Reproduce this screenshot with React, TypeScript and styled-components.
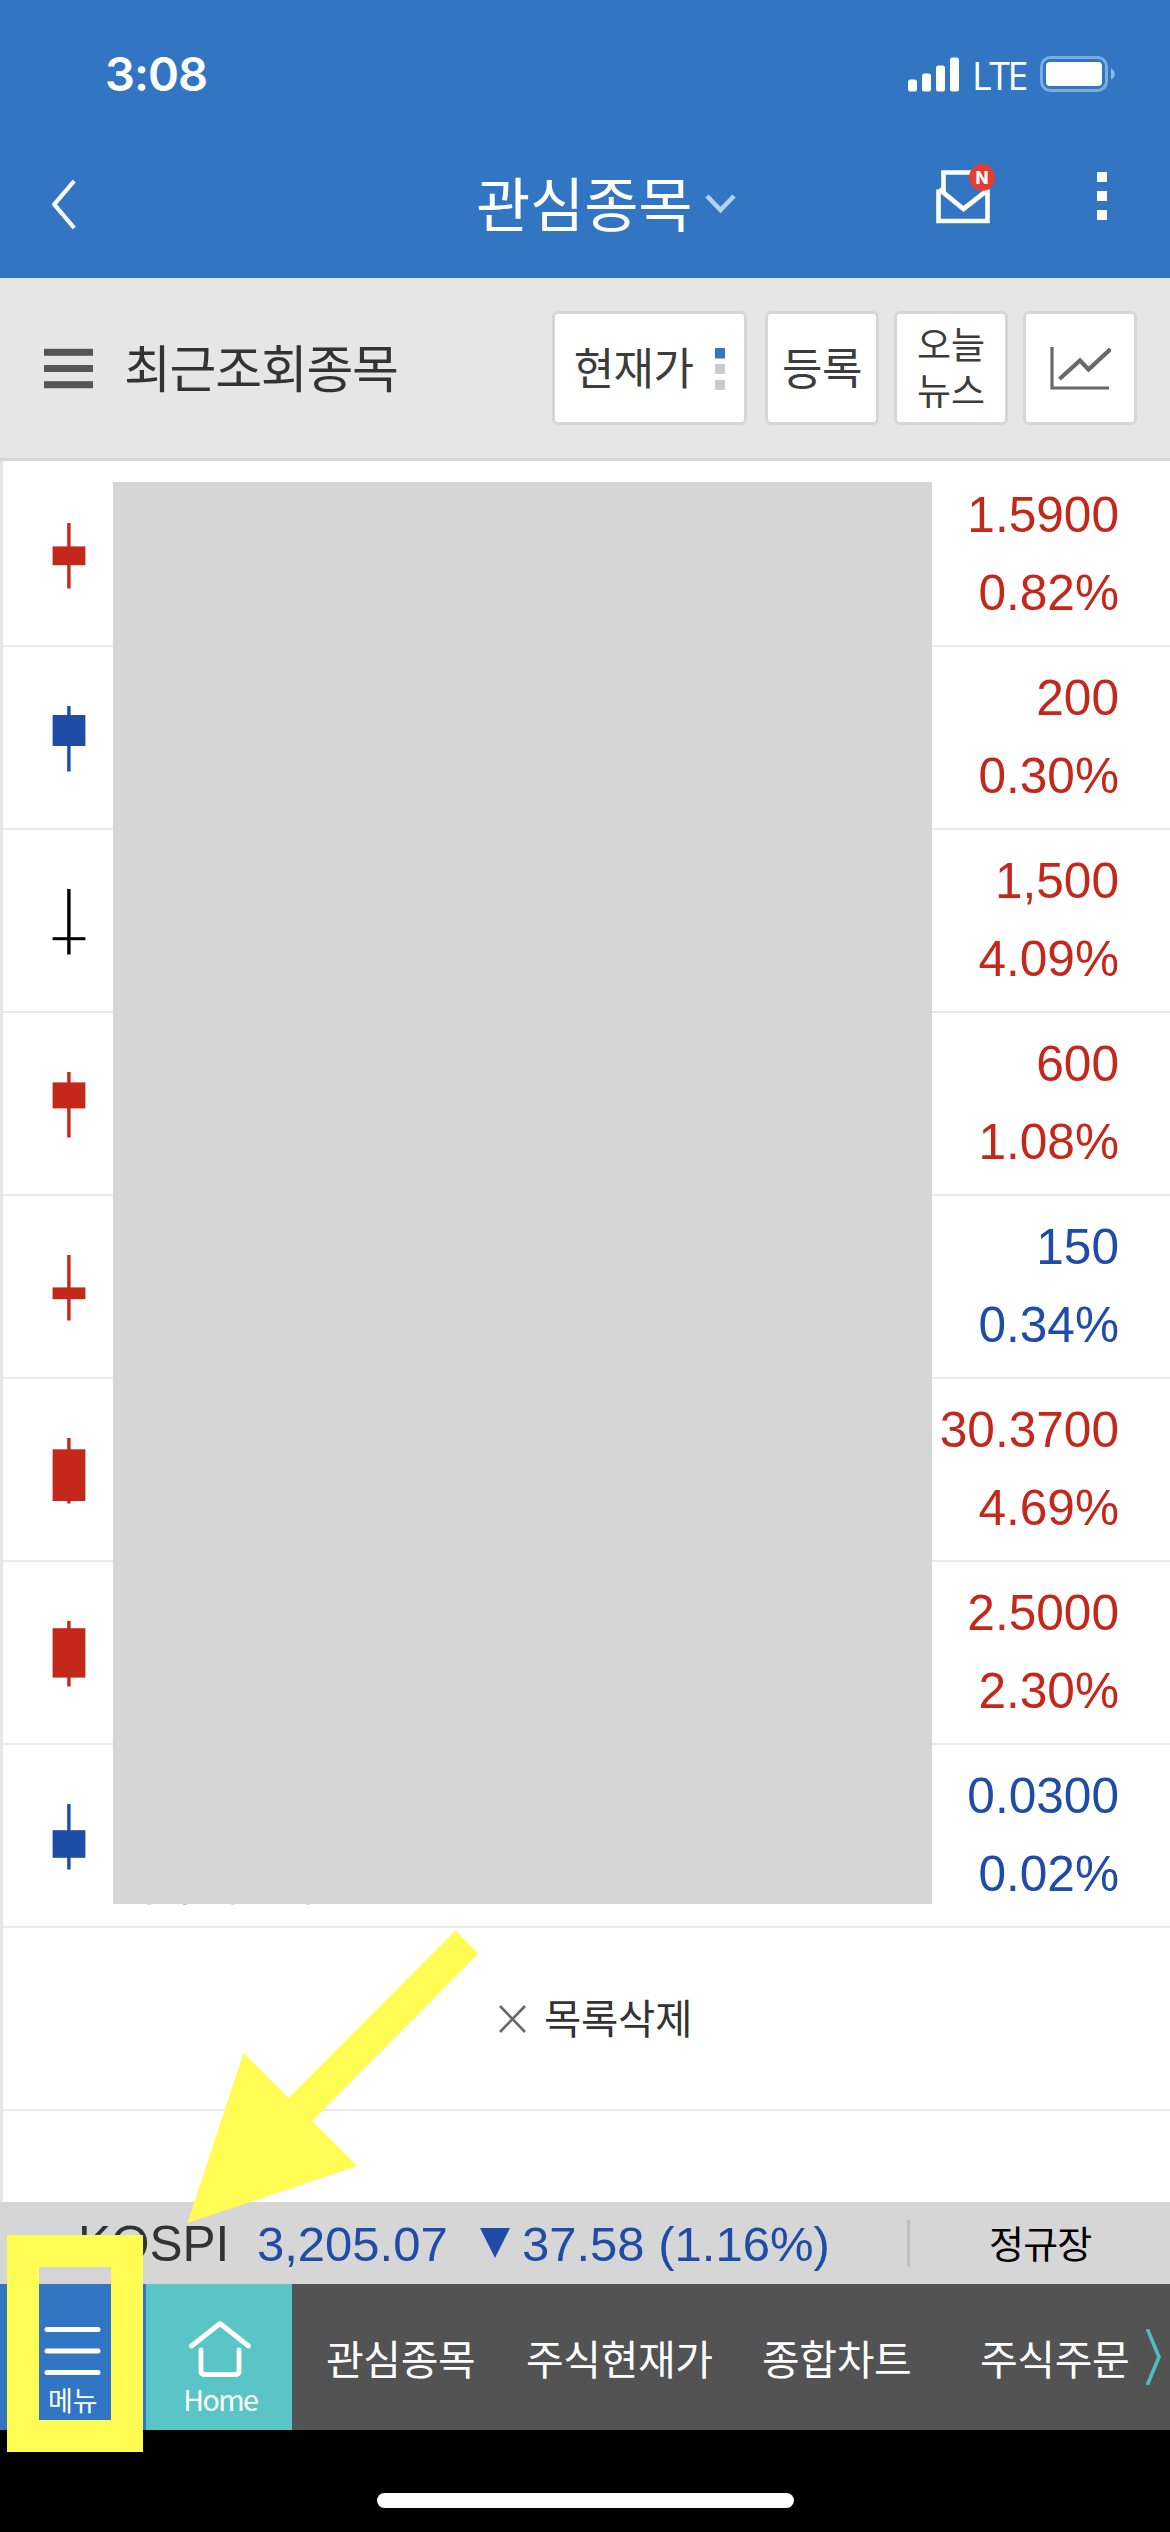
import React from "react";
import styled, { createGlobalStyle } from "styled-components";

const RED = "#c4281b";
const BLUE = "#1e4ca6";
const BLACK = "#000000";
const BRAND = "#3276c3";
const YELLOW = "#fffc54";

const KR = `"Noto Sans CJK KR", sans-serif`;
const NUM = `"Liberation Sans", "Noto Sans CJK KR", sans-serif`;

const GlobalStyle = createGlobalStyle`
  * { box-sizing: border-box; }
  html, body { margin: 0; padding: 0; background: #000; }
  button { margin: 0; padding: 0; border: 0; background: none; font: inherit; color: inherit; }
  svg { display: block; flex: none; }
`;

const Screen = styled.div`
  position: relative;
  width: 1170px;
  height: 2532px;
  display: flex;
  flex-direction: column;
  overflow: hidden;
  background: #000;
  font-family: ${KR};
`;

const Header = styled.header`
  height: 278px;
  background: ${BRAND};
  color: #fff;
`;

const StatusBar = styled.div`
  height: 148px;
  padding: 0 54px 0 105px;
  display: flex;
  align-items: center;
  justify-content: space-between;
`;

const Clock = styled.span`
  font: 600 47px/60px Inter, sans-serif;
  letter-spacing: -1px;
`;

const StatusIcons = styled.div`
  display: flex;
  align-items: center;
`;

const Carrier = styled.span`
  width: 54px;
  margin: 4px 14px 0 13px;
  font: 500 37.5px/40px "Open Sans", sans-serif;
  letter-spacing: -2.4px;
`;

const TitleBar = styled.div`
  height: 130px;
  padding: 0 62px 0 50px;
  display: grid;
  grid-template-columns: 426px 1fr 172px;
`;

const BackButton = styled.button`
  width: 30px;
  padding-top: 30px;
  display: flex;
  align-items: flex-start;
`;

const ScreenTitle = styled.h1`
  margin: 0;
  display: flex;
  gap: 13px;
  font-size: 59px;
  font-weight: 400;
  line-height: 108px;
  letter-spacing: -0.2px;
  white-space: nowrap;

  svg { margin-top: 44px; }
`;

const HeaderActions = styled.div`
  display: flex;
  justify-content: space-between;
  padding: 15px 0 0 0;
`;

const Toolbar = styled.section`
  height: 183px;
  padding: 33px 33px 0 44px;
  display: flex;
  align-items: flex-start;
  background: #e6e6e6;
  border-bottom: 3px solid #d5d5d5;
`;

const ListTitle = styled.div`
  flex: 1;
  height: 114px;
  display: flex;
  align-items: center;
  gap: 31px;
  color: #333;
  font-size: 51px;
  font-weight: 400;
  letter-spacing: -1.3px;
  white-space: nowrap;
`;

const ListName = styled.span`
  height: 74px;
  line-height: 70px;
`;

const ToolButtons = styled.div`
  display: flex;
  gap: 15px;
`;

const ToolButton = styled.button<{ $w: number; $size?: number; $ls?: number; $mr?: number }>`
  width: ${(p) => p.$w}px;
  height: 114px;
  margin-right: ${(p) => p.$mr ?? 0}px;
  display: flex;
  align-items: center;
  justify-content: center;
  gap: 22px;
  background: #fff;
  border: 3px solid #d6d6d6;
  border-radius: 6px;
  color: #3c3c3c;
  font-size: ${(p) => p.$size ?? 44}px;
  font-weight: 400;
  letter-spacing: ${(p) => p.$ls ?? -0.6}px;
  white-space: nowrap;
`;

const ToolLabel = styled.span`
  padding-bottom: 5px;
  line-height: 46px;
`;

const List = styled.main`
  position: relative;
  height: 1741px;
  padding-top: 3px;
  background: #fff;
  border-left: 3px solid #e6e6e6;
`;

const Row = styled.div`
  height: 183px;
  padding: 0 51px 0 49px;
  display: flex;
  justify-content: space-between;
  border-bottom: 2px solid #e9e9e9;
`;

const Change = styled.div<{ $color: string }>`
  padding-top: 12px;
  color: ${(p) => p.$color};
  font-family: ${NUM};
  font-size: 49.6px;
  line-height: 78px;
  text-align: right;
`;

const Mask = styled.div`
  position: absolute;
  left: 110px;
  top: 21px;
  width: 819px;
  height: 1422px;
  background: #d6d6d6;

  /* slivers of the covered row that stick out under the block */
  &::after {
    content: "";
    position: absolute;
    left: 34px;
    top: 100%;
    width: 4px;
    height: 1px;
    background: #dcdcdc;
    box-shadow: 36px 0 #c4c4c4, 84px 0 #dcdcdc, 159px 0 #dcdcdc;
  }
`;

const ClearRow = styled.button`
  width: 100%;
  height: 183px;
  padding: 0 0 0 496px;
  display: flex;
  align-items: center;
  gap: 18px;
  border-bottom: 2px solid #e9e9e9;
  color: #333;
  font-size: 40.5px;
  font-weight: 400;
  line-height: 60px;
  letter-spacing: -0.2px;
`;

const ClearLabel = styled.span`
  padding-bottom: 3px;
`;

const Ticker = styled.section`
  height: 82px;
  padding-left: 78px;
  display: flex;
  align-items: center;
  background: #d6d6d6;
  color: ${BLUE};
  font-family: ${NUM};
  font-size: 49px;
  line-height: 60px;
  white-space: pre;

  > * { flex: none; }
`;

const IndexName = styled.span`
  width: 179px;
  padding-top: 2px;
  color: #333;
  font-size: 49.5px;
`;

const IndexValue = styled.span`
  width: 223px;
  padding-top: 2px;
`;

const IndexDelta = styled.span`
  width: 397px;
  padding: 2px 0 0 12px;
`;

const Divider = styled.span`
  width: 3px;
  height: 47px;
  background: #bfbfbf;
`;

const Session = styled.span`
  padding: 0 0 3px 79px;
  color: #000;
  font-family: ${KR};
  font-size: 38px;
  font-weight: 400;
  letter-spacing: -0.8px;
`;

const TabBar = styled.nav`
  height: 146px;
  display: flex;
  background: #535353;
  color: #fff;
`;

const IconTab = styled.button<{ $bg: string; $top: number; $w: number }>`
  width: ${(p) => p.$w}px;
  padding-top: ${(p) => p.$top}px;
  display: flex;
  flex-direction: column;
  align-items: center;
  background: ${(p) => p.$bg};
`;

const IconLabel = styled.span<{ $size: number; $mt?: number; $ml?: number; $ls?: number }>`
  height: 40px;
  margin-top: ${(p) => p.$mt ?? 0}px;
  margin-left: ${(p) => p.$ml ?? 0}px;
  font-size: ${(p) => p.$size}px;
  line-height: 40px;
  font-weight: 400;
  letter-spacing: ${(p) => p.$ls ?? 0}px;
`;

const TabLinks = styled.div`
  flex: 1;
  display: flex;
  align-items: center;
  padding: 0 8px 0 34px;
  font-size: 41px;
  font-weight: 400;
  line-height: 60px;
  letter-spacing: -0.4px;
  white-space: nowrap;
`;

const TabLink = styled.a<{ $w: number }>`
  width: ${(p) => p.$w}px;
`;

const HomeArea = styled.footer`
  flex: 1;
  padding-top: 63px;
  display: flex;
  justify-content: center;
  align-items: flex-start;
`;

const HomeIndicator = styled.span`
  width: 417px;
  height: 15px;
  border-radius: 8px;
  background: #fff;
`;

const HighlightBox = styled.div`
  position: absolute;
  left: 7px;
  top: 2235px;
  width: 136px;
  height: 217px;
  border: 32px solid ${YELLOW};
`;

const ArrowLayer = styled.div`
  position: absolute;
  left: 187px;
  top: 1930px;
`;

interface Quote {
  change: string;
  rate: string;
  color: string;
  candle: string;
  body: [number, number];
}

const quotes: Quote[] = [
  { change: "1.5900", rate: "0.82%", color: RED, candle: RED, body: [82.4, 18.8] },
  { change: "200", rate: "0.30%", color: RED, candle: BLUE, body: [68, 31] },
  { change: "1,500", rate: "4.09%", color: RED, candle: BLACK, body: [107.2, 3] },
  { change: "600", rate: "1.08%", color: RED, candle: RED, body: [69.4, 26] },
  { change: "150", rate: "0.34%", color: BLUE, candle: RED, body: [91.4, 11.8] },
  { change: "30.3700", rate: "4.69%", color: RED, candle: RED, body: [70.3, 51.7] },
  { change: "2.5000", rate: "2.30%", color: RED, candle: RED, body: [66.2, 49.4] },
  { change: "0.0300", rate: "0.02%", color: BLUE, candle: BLUE, body: [85.2, 27.6] },
];

const Candle = ({ color, body }: { color: string; body: [number, number] }) => (
  <svg width="34" height="181" viewBox="0 0 34 181" fill={color}>
    <rect x="15.2" y="59" width="3.4" height="65.5" />
    <rect x="0.6" y={body[0]} width="32.8" height={body[1]} />
  </svg>
);

const SignalIcon = () => (
  <svg width="51" height="35" viewBox="0 0 51 35" fill="#fff">
    <rect x="0" y="22.5" width="9" height="12" rx="2.5" />
    <rect x="14" y="16.5" width="9" height="18" rx="2.5" />
    <rect x="28" y="8.5" width="9" height="26" rx="2.5" />
    <rect x="42" y="0.5" width="9" height="34" rx="2.5" />
  </svg>
);

const BatteryIcon = () => (
  <svg width="76" height="36" viewBox="0 0 76 36">
    <rect x="1.5" y="1.5" width="65" height="33" rx="9" fill="none" stroke="#7aaddb" strokeWidth="3" />
    <rect x="6" y="6" width="56" height="24" rx="4" fill="#fff" />
    <path d="M71 12.5c5 2 5 9 0 11z" fill="#8bb8e0" />
  </svg>
);

const MailIcon = () => (
  <svg width="60" height="64" viewBox="0 0 60 64">
    <path d="M7.5 31V9.5H40" fill="none" stroke="#fff" strokeWidth="4.6" />
    <path d="M2.5 26.5V58H51.5V26.5" fill="none" stroke="#fff" strokeWidth="4.6" />
    <path d="M3 26.5L6 28.5L27.5 46L48 30L52 26.5" fill="none" stroke="#fff" strokeWidth="4.8" />
    <ellipse cx="46" cy="14.5" rx="13" ry="13.5" fill="#e33d34" />
    <text x="46" y="20.5" textAnchor="middle" fill="#fff" fontFamily="Inter, sans-serif" fontWeight="800" fontSize="17">N</text>
  </svg>
);

const MoreIcon = () => (
  <svg width="12" height="60" viewBox="0 0 12 60" fill="#fff">
    <rect x="1" y="9" width="10" height="10" />
    <rect x="1" y="28" width="10" height="10" />
    <rect x="1" y="47" width="10" height="10" />
  </svg>
);

export default function App() {
  return (
    <>
      <GlobalStyle />
      <Screen>
        <Header>
          <StatusBar>
            <Clock>3:08</Clock>
            <StatusIcons>
              <SignalIcon />
              <Carrier>LTE</Carrier>
              <BatteryIcon />
            </StatusIcons>
          </StatusBar>
          <TitleBar>
            <BackButton aria-label="back">
              <svg width="28" height="52" viewBox="0 0 28 52" fill="none" stroke="#fff" strokeWidth="4.2" strokeLinejoin="round">
                <path d="M24.2 3L4.2 26.3L24.2 50" />
              </svg>
            </BackButton>
            <ScreenTitle>
              관심종목
              <svg width="32" height="24" viewBox="0 0 32 24" fill="none" stroke="#b5d3ee" strokeWidth="4.6">
                <path d="M2 4L15.5 18L29 4" />
              </svg>
            </ScreenTitle>
            <HeaderActions>
              <MailIcon />
              <MoreIcon />
            </HeaderActions>
          </TitleBar>
        </Header>

        <Toolbar>
          <ListTitle>
            <svg width="49" height="41" viewBox="0 0 49 41" fill="#555">
              <rect y="0.8" width="49" height="7" />
              <rect y="17" width="49" height="7" />
              <rect y="33.2" width="49" height="7" />
            </svg>
            <ListName>최근조회종목</ListName>
          </ListTitle>
          <ToolButtons>
            <ToolButton $w={195} $mr={3}>
              <ToolLabel>현재가</ToolLabel>
              <svg width="10" height="44" viewBox="0 0 10 44" fill="#cbcbcb">
                <rect y="2" width="10" height="10.5" fill={BRAND} />
                <rect y="18" width="10" height="10" />
                <rect y="34" width="10" height="10" />
              </svg>
            </ToolButton>
            <ToolButton $w={114}>
              <ToolLabel>등록</ToolLabel>
            </ToolButton>
            <ToolButton $w={114} $size={37} $ls={0}>
              <ToolLabel>
                오늘
                <br />
                뉴스
              </ToolLabel>
            </ToolButton>
            <ToolButton $w={114}>
              <svg width="62" height="46" viewBox="0 0 62 46" fill="none" stroke="#69696c">
                <path d="M3 2V43H60" strokeWidth="3.2" />
                <path d="M10.5 34L31 15.500L39.500 24.500L61.500 4" strokeWidth="4.2" />
              </svg>
            </ToolButton>
          </ToolButtons>
        </Toolbar>

        <List>
          {quotes.map((q) => (
            <Row key={q.change}>
              <Candle color={q.candle} body={q.body} />
              <Change $color={q.color}>
                <div>{q.change}</div>
                <div>{q.rate}</div>
              </Change>
            </Row>
          ))}
          <ClearRow>
            <svg width="27" height="28" viewBox="0 0 27 28" stroke="#69696c" strokeWidth="2.6">
              <path d="M1 1L26 27M26 1L1 27" />
            </svg>
            <ClearLabel>목록삭제</ClearLabel>
          </ClearRow>
          <Mask />
        </List>

        <Ticker>
          <IndexName>KOSPI</IndexName>
          <IndexValue>3,205.07</IndexValue>
          <svg width="30" height="30" viewBox="0 0 30 30" fill={BLUE}>
            <path d="M0 0H30L15 30Z" />
          </svg>
          <IndexDelta>37.58 (1.16%)</IndexDelta>
          <Divider />
          <Session>정규장</Session>
        </Ticker>

        <TabBar>
          <IconTab $bg={BRAND} $top={42} $w={146}>
            <svg width="57" height="50" viewBox="0 0 57 50" stroke="#fff" strokeWidth="5" strokeLinecap="round">
              <path d="M3 3.5H54M3 25H54M3 46.5H54" />
            </svg>
            <IconLabel $size={27} $mt={4}>메뉴</IconLabel>
          </IconTab>
          <IconTab $bg="#5ac5c7" $top={36} $w={147}>
            <svg width="64" height="60" viewBox="0 0 64 60" fill="none" stroke="#fff" strokeWidth="4.8" strokeLinecap="round" strokeLinejoin="round">
              <path d="M4.500 26L33 3.500L61.500 26" />
              <path d="M14 30V51Q14 54.500 17.500 54.500H48.500Q52 54.500 52 51V30" />
            </svg>
            <IconLabel $size={28.5} $mt={-1} $ml={3} $ls={-1.5}>Home</IconLabel>
          </IconTab>
          <TabLinks>
            <TabLink $w={200}>관심종목</TabLink>
            <TabLink $w={236}>주식현재가</TabLink>
            <TabLink $w={218}>종합차트</TabLink>
            <TabLink $w={166}>주식주문</TabLink>
            <svg width="16" height="56" viewBox="0 0 16 56" fill="none" stroke="#4fbcbf" strokeWidth="3.6">
              <path d="M0.5 -2L13 28L0.5 58" />
            </svg>
          </TabLinks>
        </TabBar>

        <HomeArea>
          <HomeIndicator />
        </HomeArea>

        <ArrowLayer>
          <svg width="292" height="294" viewBox="0 0 292 294" fill={YELLOW}>
            <path d="M268.5 0.5L291.5 23.5L125 191L170 236L0.5 293L56.5 123L101.5 168Z" />
          </svg>
        </ArrowLayer>
        <HighlightBox />
      </Screen>
    </>
  );
}
